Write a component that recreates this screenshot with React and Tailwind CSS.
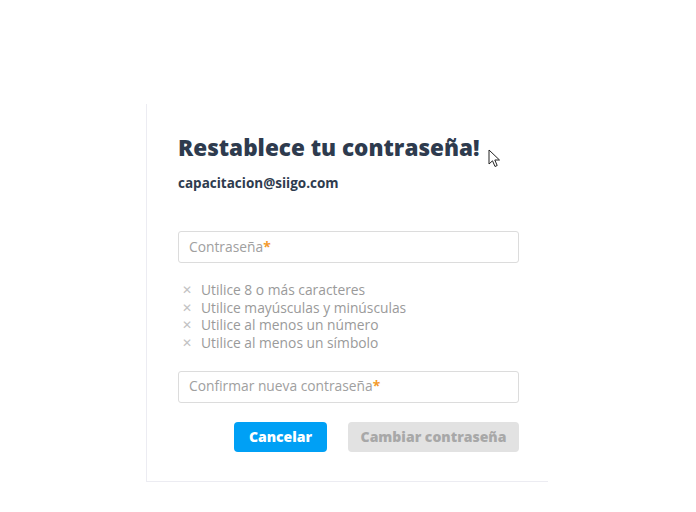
import React from "react";

const items = [
  "Utilice 8 o más caracteres",
  "Utilice mayúsculas y minúsculas",
  "Utilice al menos un número",
  "Utilice al menos un símbolo",
];

export default function App() {
  return (
    <div className="w-[696px] h-[512px] bg-white relative overflow-hidden" style={{ fontFamily: "'Open Sans', 'Noto Sans', sans-serif" }}>
      <div className="pt-[104px] pl-[146px]">
        <div className="w-[402px] h-[378px] border-l border-b border-[#ececf2] pl-[31px] pr-[29px] pt-[29px]">
          <h1 className="text-[22.5px] leading-[30px] font-extrabold text-[#2e3b4e]">Restablece tu contraseña!</h1>
          <p className="mt-[11px] text-[13.5px] leading-[18px] font-bold text-[#2e3b4e]">capacitacion@siigo.com</p>
          <div className="mt-[39px] h-[32px] border border-[#dcdcdc] rounded-[3px] flex items-center px-[10px] text-[13.8px] text-[#a0a0a0]">
            Contraseña<span className="text-[#f39a2c] font-bold">*</span>
          </div>
          <ul className="mt-[18px] flex flex-col text-[13.8px] leading-[17.7px] text-[#9a9a9a]">
            {items.map((t) => (
              <li key={t} className="flex items-center">
                <span className="w-[23px] pl-[4px] text-[#c2c2c2] text-[12px]">✕</span>
                {t}
              </li>
            ))}
          </ul>
          <div className="mt-[19px] h-[32px] border border-[#dcdcdc] rounded-[3px] flex items-center px-[10px] text-[13.8px] text-[#a0a0a0]">
            Confirmar nueva contraseña<span className="text-[#f39a2c] font-bold">*</span>
          </div>
          <div className="mt-[19px] flex justify-end gap-[21px]">
            <button className="w-[93px] h-[30px] rounded-[4px] bg-[#00a0f5] text-white text-[14px] font-extrabold">Cancelar</button>
            <button className="w-[171px] h-[30px] rounded-[4px] bg-[#e2e2e2] text-[#a8a8a8] text-[14px] font-extrabold">Cambiar contraseña</button>
          </div>
        </div>
      </div>
      <svg className="absolute left-[488px] top-[149px]" width="14" height="20" viewBox="0 0 14 20">
        <path d="M1 1 L1 15 L4.5 11.8 L7 17.5 L9.2 16.5 L6.8 11 L11.5 11 Z" fill="white" stroke="#222" strokeWidth="1" strokeLinejoin="round" />
      </svg>
    </div>
  );
}
